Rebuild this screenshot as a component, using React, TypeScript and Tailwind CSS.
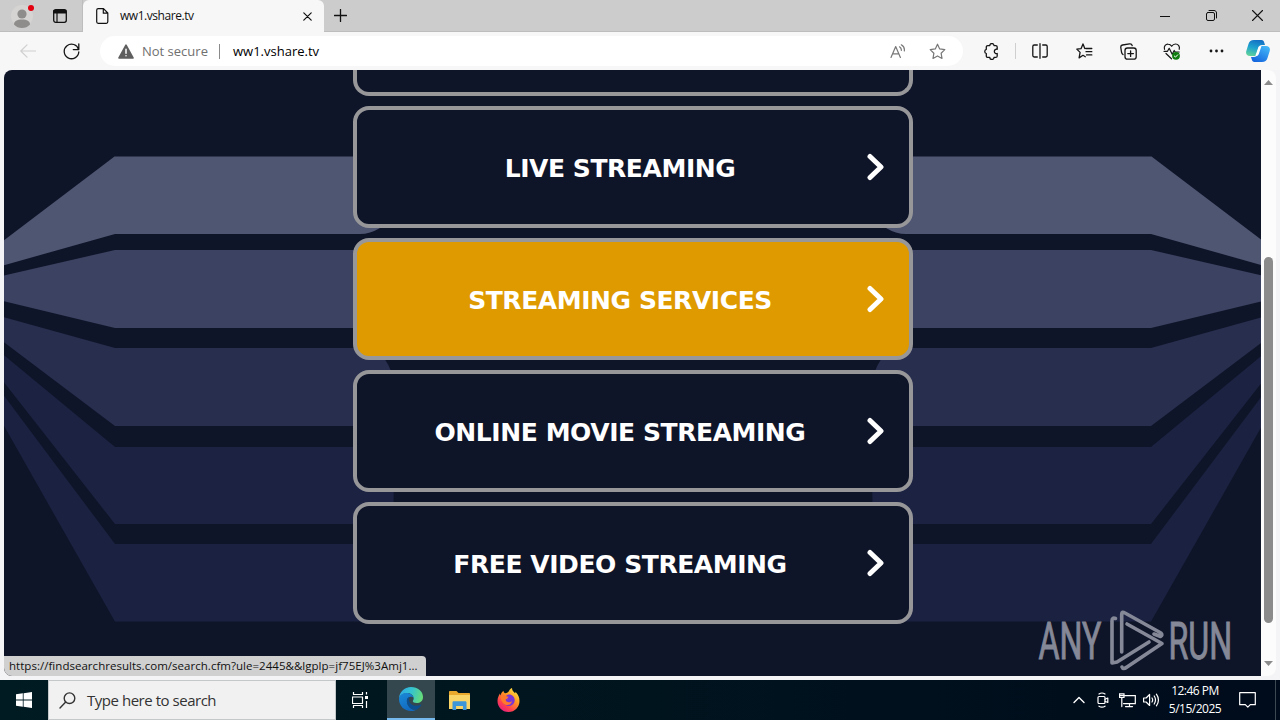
import React from "react";

type IconProps = { w: number; h: number; box?: string; className?: string; children: React.ReactNode };

function Icon({ w, h, box, className = "", children }: IconProps) {
  return (
    <svg
      width={w}
      height={h}
      viewBox={box ?? `0 0 ${w} ${h}`}
      fill="none"
      stroke="currentColor"
      strokeLinecap="round"
      strokeLinejoin="round"
      className={`block shrink-0 ${className}`}
    >
      {children}
    </svg>
  );
}

function TabStrip() {
  return (
    <div className="flex h-8 shrink-0 bg-[#cccccc] text-[#111]">
      <div className="flex w-[83px] items-center border-r border-b border-[#bdbdbd] pl-[11px]">
        <Icon w={23} h={28}>
          <g stroke="none">
            <circle cx="11" cy="14" r="11" fill="#d6d4d2" />
            <circle cx="11" cy="12" r="4.600" fill="#8f8d8b" />
            <path d="M3 22.500c0-3.500 3-5 8-5s8 1.500 8 5c-2 2.500-5 3.500-8 3.500s-6-1-8-3.500z" fill="#8f8d8b" />
            <circle cx="20" cy="6" r="3" fill="#e3000f" />
          </g>
        </Icon>
        <Icon w={14} h={14} className="ml-[19px]">
          <rect x="0.700" y="0.700" width="12.600" height="12.600" rx="2" strokeWidth="1.300" />
          <path d="M1 1.500h12v2.500H1z" fill="currentColor" strokeWidth="1" />
          <path d="M4 4v9" strokeWidth="1.200" />
        </Icon>
      </div>
      <div className="flex w-[241px] items-center rounded-t-[6px] bg-[#f7f7f7] pl-[13px]">
        <Icon w={13} h={16}>
          <path d="M2.200 0.700h5.300l4.300 4.300v8.800c0 .8-.6 1.500-1.500 1.500H2.200c-.8 0-1.500-.7-1.500-1.500V2.200c0-.8.7-1.500 1.500-1.500z M7.300 1v4.200h4.400" strokeWidth="1.200" />
        </Icon>
        <span className="ml-[11px] w-[183px] text-[12px] leading-4 tracking-[-0.45px]">ww1.vshare.tv</span>
        <Icon w={9} h={9}>
          <path d="M.8.8l7.400 7.400M8.200.8L.8 8.200" strokeWidth="1.200" />
        </Icon>
      </div>
      <div className="flex flex-1 items-center border-b border-[#bdbdbd] pl-[10px]">
        <Icon w={13} h={13}>
          <path d="M6.500.5v12M.5 6.500h12" strokeWidth="1.300" />
        </Icon>
      </div>
      <div className="flex w-[138px] border-b border-[#bdbdbd]">
        <div className="flex w-[46px] items-center justify-center">
          <Icon w={10} h={10}><path d="M0 5.500h10" /></Icon>
        </div>
        <div className="flex w-[46px] items-center justify-center">
          <Icon w={11} h={11}>
            <rect x="0.500" y="2.500" width="8" height="8" rx="1.500" />
            <path d="M3 .5h5c1.500 0 2.500 1 2.500 2.500v5" />
          </Icon>
        </div>
        <div className="flex w-[46px] items-center justify-center">
          <Icon w={11} h={11}><path d="M.5.5l10 10M10.500.5l-10 10" strokeWidth="1.100" /></Icon>
        </div>
      </div>
    </div>
  );
}

function ToolCell({ children }: { children: React.ReactNode }) {
  return <div className="flex w-11 items-center justify-center">{children}</div>;
}

function Toolbar() {
  return (
    <div className="flex h-[38px] shrink-0 items-center bg-[#f7f7f7] text-[#161616]">
      <div className="flex w-[100px] items-center pl-[20px]">
        <Icon w={16} h={14} className="text-[#d0d0d0]">
          <path d="M15.500 7H.8M7 .8L.8 7 7 13.200" strokeWidth="1.200" />
        </Icon>
        <Icon w={17} h={17} className="ml-[27px]">
          <path d="M15.600 6.600A7.300 7.300 0 1 0 15.800 9M15.800 1v5.600h-5.500" strokeWidth="1.300" />
        </Icon>
      </div>
      <div className="flex h-[30px] w-[863px] items-center rounded-full bg-white pl-[18px]">
        <Icon w={16} h={15}>
          <path d="M8 1.200L15 14H1z" fill="#5f5f5f" stroke="#5f5f5f" strokeWidth="1.600" />
          <path d="M8 5.300v4M8 11.700v.1" stroke="#fff" strokeWidth="1.500" />
        </Icon>
        <span className="ml-[8px] w-[77px] text-[13px] leading-4 text-[#707070]">Not secure</span>
        <span className="h-[15px] w-px bg-[#8a8a8a]" />
        <span className="ml-[13px] w-[657px] text-[13px] leading-4 text-black">ww1.vshare.tv</span>
        <Icon w={16} h={15} className="text-[#777]">
          <path d="M1 13.500L5.700 2.500l4.700 11M2.500 9.800h6.300M9.500 2.800c1.300.8 2 2.200 1.800 3.700M11.300.8c2.300 1.300 3.400 3.700 3 6.200" strokeWidth="1.200" />
        </Icon>
        <Icon w={17} h={17} className="ml-[23px] text-[#777]">
          <path d="M8.500 1.200l2.200 4.700 5.100.7-3.700 3.600.9 5.200-4.500-2.500L4 15.400l.9-5.200L1.200 6.600l5.100-.7z" strokeWidth="1.200" />
        </Icon>
      </div>
      <div className="flex w-[51px] items-center pl-[20px]">
        <Icon w={16} h={17}>
          <path d="M4.800 2.600h2a2.100 2.100 0 0 1 4.200 0h1.700c.8 0 1.500.6 1.500 1.500v2.200a2.200 2.200 0 1 0 0 4.200v2.400c0 .8-.6 1.500-1.500 1.500H11a2.100 2.100 0 0 1-4.200 0h-2c-.9 0-1.500-.6-1.500-1.500v-2.400a2.200 2.200 0 0 1 0-4.200V4.100c0-.9.600-1.500 1.500-1.500z" strokeWidth="1.300" />
        </Icon>
      </div>
      <span className="mr-[2px] ml-px h-4 w-px bg-[#cfcfcf]" />
      <ToolCell>
        <Icon w={16} h={16}>
          <path d="M5.300 2H2.200C1.400 2 .8 2.600.8 3.400v9.200c0 .8.600 1.400 1.400 1.400h3.100M10.700 2h3.100c.8 0 1.400.6 1.400 1.400v9.200c0 .8-.6 1.400-1.400 1.400h-3.100M8 .7v14.600" strokeWidth="1.300" />
        </Icon>
      </ToolCell>
      <ToolCell>
        <Icon w={17} h={16}>
          <path d="M8.800 5.500L7 .9 5 5.700.8 6.100l3.300 3.300-1 5.500L7 12.300l2.300 1.400M9.800 5.500h6M10 8.700h5.800M10.500 11.900h5.300" strokeWidth="1.300" />
        </Icon>
      </ToolCell>
      <ToolCell>
        <Icon w={17} h={17}>
          <rect x="5" y="5" width="11.200" height="11.200" rx="2.500" strokeWidth="1.300" />
          <path d="M10.600 7.800v5.600M7.800 10.600h5.600" strokeWidth="1.300" />
          <path d="M3 11.600C1.800 10.700 1.700 10 1.500 9L.8 4.500C.6 3 1.300 2.200 2.500 2L9.500.9c1.400-.2 2.400.4 2.700 1.700" strokeWidth="1.300" />
        </Icon>
      </ToolCell>
      <ToolCell>
        <Icon w={18} h={17}>
          <path d="M1.500 6.300C.5 3 3 .8 5.200 1.100c1.600.1 2.800 1.100 3.500 2.200C9.500 2 10.800 1 12.500 1c2.800 0 4.600 2.500 3.700 5.300M1 8.300h3.500l1.700-3 3 6 2-3.800 1 1.500h4M3 10.500l5.500 5.300" strokeWidth="1.200" />
          <circle cx="13" cy="12.800" r="3.900" fill="#107c10" stroke="none" />
          <path d="M11.300 13l1.200 1.100 2.200-2.300" stroke="#fff" strokeWidth="1" />
        </Icon>
      </ToolCell>
      <ToolCell>
        <Icon w={15} h={4}>
          <g fill="currentColor" stroke="none">
            <circle cx="2" cy="2" r="1.400" />
            <circle cx="7.500" cy="2" r="1.400" />
            <circle cx="13" cy="2" r="1.400" />
          </g>
        </Icon>
      </ToolCell>
      <div className="flex w-10 items-center justify-center">
        <Icon w={24} h={22}>
          <defs>
            <linearGradient id="cpA" x1="0.600" y1="0" x2="0.300" y2="1">
              <stop offset="0" stopColor="#1470c4" />
              <stop offset="0.500" stopColor="#1ea3cf" />
              <stop offset="1" stopColor="#5fd29a" />
            </linearGradient>
            <linearGradient id="cpB" x1="0.800" y1="0" x2="0.200" y2="1">
              <stop offset="0" stopColor="#43b8f8" />
              <stop offset="1" stopColor="#1463dd" />
            </linearGradient>
          </defs>
          <g stroke="none">
            <path d="M8 0h7.500c1.700 0 2.300 1.300 2.700 2.500L19 5h-3c-2 0-3 1-3.500 2.700L10 16H4c-3 0-4.500-2-3.700-5L2.500 4C3.300 1.500 5 0 8 0z" fill="url(#cpA)" />
            <path d="M16 22H8.500c-1.700 0-2.300-1.300-2.700-2.500L5 17h3c2 0 3-1 3.500-2.700L14 6h6c3 0 4.500 2 3.700 5L21.500 18c-.8 2.500-2.500 4-5.500 4z" fill="url(#cpB)" />
            <path d="M15.500 6h-1c-1.500 0-2 .8-2.400 2L9.300 16h.9c1.500 0 2.200-.8 2.600-2z" fill="#fff" />
          </g>
        </Icon>
      </div>
    </div>
  );
}

function Bands() {
  return (
    <>
      <path fill="#4f5672" d="M3 241L114.500 156.500H400V228H380Q370 234 360 234H115L3 265.500z" />
      <path fill="#3c4261" d="M3 275.700L115 250H380V328H115L3 301z" />
      <path fill="#282e4e" d="M3 317L115 348H375Q386 358 391 371V426H115L3 341.500z" />
      <path fill="#1c2342" d="M3 354.500L115 447H394.500L393.500 503V524H115L3 381z" />
      <path fill="#1b2241" d="M3 394.500L115 544H380V621.500H115L3 424z" />
    </>
  );
}

function Backdrop() {
  return (
    <svg className="absolute inset-0 block" width="1257" height="606" viewBox="4 70 1257 606">
      <Bands />
      <g transform="translate(1266 0) scale(-1 1)">
        <Bands />
      </g>
    </svg>
  );
}

const links = [
  { label: "LIVE STREAMING", active: false },
  { label: "STREAMING SERVICES", active: true },
  { label: "ONLINE MOVIE STREAMING", active: false },
  { label: "FREE VIDEO STREAMING", active: false },
];

function LinkCard({ label, active }: { label: string; active: boolean }) {
  return (
    <div
      className={`flex h-[122px] items-center rounded-[16px] border-4 border-[#979799] pr-[25px] pl-[17px] ${
        active ? "bg-[#df9a00]" : "bg-[#0f1529]"
      }`}
    >
      <span className="flex-1 pt-[4px] pr-px text-center font-['DejaVu_Sans',sans-serif] text-[25px] leading-8 font-bold tracking-[-0.43px] whitespace-nowrap text-white">
        {label}
      </span>
      <Icon w={17} h={28} className="text-white">
        <path d="M3 3.500L14 14 3 24.500" strokeWidth="5" />
      </Icon>
    </div>
  );
}

function Watermark() {
  return (
    <svg className="absolute top-[530px] left-[1033px] block" width="204" height="76" viewBox="1037 600 204 76">
      <g fill="#858897" stroke="#858897" strokeWidth="1" fontFamily="Roboto" fontSize="51.500">
        <text transform="translate(1038.500 659) scale(0.625 1)">ANY</text>
        <text transform="translate(1168.500 659) scale(0.625 1)">RUN</text>
      </g>
      <g fill="none" stroke="#858897" strokeWidth="3.600" strokeLinejoin="round" strokeLinecap="round">
        <path d="M1115.500 618.500Q1112 617 1112 621V663L1117 662L1149 642" />
        <path d="M1121.700 652V614Q1121.700 611 1125 613L1161 633Q1163 635 1160.500 636.500L1154 634" />
        <path d="M1127 624L1162 643.500L1127 667Q1123 670 1122 667" />
      </g>
    </svg>
  );
}

function Page() {
  return (
    <div className="flex h-[610px] shrink-0 bg-[#f4f4f6] pr-1 pb-1 pl-1">
      <div className="relative h-[606px] w-[1257px] overflow-hidden rounded-tl-[8px] rounded-bl-[8px] bg-[#0f1529]">
        <Backdrop />
        <div className="relative ml-[349px] flex w-[560px] flex-col gap-[10px]">
          <div className="h-[26px] rounded-b-[16px] border-4 border-t-0 border-[#979799] bg-[#0f1529]" />
          {links.map((l) => (
            <LinkCard key={l.label} label={l.label} active={l.active} />
          ))}
        </div>
        <Watermark />
        <div className="absolute bottom-0 left-0 flex h-5 w-[422px] items-center rounded-tr-[4px] bg-[#d0d0d0] pl-[5px] text-[11.500px] leading-4 tracking-[0.03px] whitespace-nowrap text-[#111]">
          https://findsearchresults.com/search.cfm?ule=2445&amp;&amp;lgplp=jf75EJ%3Amj1...
        </div>
      </div>
      <div className="flex w-[15px] flex-col items-center rounded-r-[8px] bg-[#fcfcfc] text-[#8b8b8b]">
        <Icon w={9} h={5} className="mt-[10px]">
          <path d="M4.500 0L9 5H0z" fill="currentColor" stroke="none" />
        </Icon>
        <div className="mt-[172px] h-[366px] w-[9px] rounded-full bg-[#8b8b8b]" />
        <Icon w={9} h={5} className="mt-[38px]">
          <path d="M4.500 5L9 0H0z" fill="currentColor" stroke="none" />
        </Icon>
      </div>
    </div>
  );
}

function EdgeLogo() {
  return (
    <Icon w={24} h={24}>
      <defs>
        <linearGradient id="edA" x1="0" y1="0.300" x2="1" y2="0.500">
          <stop offset="0" stopColor="#2fa8e6" />
          <stop offset="0.500" stopColor="#35c4cf" />
          <stop offset="1" stopColor="#67dc78" />
        </linearGradient>
        <linearGradient id="edB" x1="0" y1="0" x2="0.500" y2="1">
          <stop offset="0" stopColor="#1b8ad8" />
          <stop offset="1" stopColor="#1169c0" />
        </linearGradient>
      </defs>
      <g stroke="none">
        <path d="M0 12C0 5 5.500 0 12 0c7 0 12 4.500 12 10 0 4-3 6-6.300 6-2.700 0-3.900-.9-3.900-1.700 0-.7.900-1 .9-2.800C14.700 8.500 12 6 8.500 6 4 6 .6 8.500 0 12z" fill="url(#edA)" />
        <path d="M0 12c.5-4 4-6 7.500-6 3 0 6.500 1.500 7.200 5-.7-1-2-1.500-3.200-1.300C8.500 10 7.500 13 8 15.500c.8 4.500 5.500 8.500 9.500 7C15.800 23.500 14 24 12 24 5.500 24 0 19 0 12z" fill="url(#edB)" />
        <path d="M8 15c-.5-2.500.7-4.700 2.700-5.200-1 1.500-1.200 3.200-.2 5.200 1.500 3.300 6.500 5 11.500 2.500.3-.1.600.2.400.5-1 1.900-2.700 3.500-4.400 4.400C13.500 24 8.700 20 8 15z" fill="#0b4f91" />
      </g>
    </Icon>
  );
}

function FirefoxLogo() {
  return (
    <Icon w={23} h={24}>
      <defs>
        <linearGradient id="ffA" x1="0.900" y1="0" x2="0.200" y2="1">
          <stop offset="0" stopColor="#fff04a" />
          <stop offset="0.400" stopColor="#ff9a22" />
          <stop offset="0.750" stopColor="#ff3f4f" />
          <stop offset="1" stopColor="#e01a86" />
        </linearGradient>
      </defs>
      <g stroke="none">
        <path d="M11.500 24C5 24 .5 19 .5 13c0-3 1.200-5.500 2.500-7.500.1 1 .3 1.500.6 2C4 5.500 5 4 6.500 2.800c0 1.200.6 2 1.500 2.500C10 5 11.500 4 12 3c.5-1.200 1.500-2.300 3-3 0 2.500 1.500 3.500 3 5.200.5-.5.500-1 .4-1.500C21.500 6.500 22.500 9.500 22.500 13c0 6-4.500 11-11 11z" fill="url(#ffA)" />
        <path d="M12 6.500c3.300 0 5.700 2.500 5.700 5.700S15 18 11.800 18s-5.600-2.500-5.600-5.300c0-.7.100-1.300.3-1.700 1.500-.8 3 .5 4.800.2-1-.7-2-1.200-3.300-1.400C8.800 7.800 10 6.500 12 6.500z" fill="#7a35d5" />
        <path d="M3.500 8C5 6.500 7 6.500 8 7.500c.7.800 2 1 3.500 1.200-.2 1.200-1.500 1.500-2.300 2-.6.500-.4 1.500-.2 2.100 1 2 4.500 1.700 6 .2-.5 3-3 4.500-5.500 4C6 16.500 3.500 12 3.500 8z" fill="#ff7a2a" />
      </g>
    </Icon>
  );
}

function Taskbar() {
  return (
    <div className="flex h-10 shrink-0 bg-linear-to-r from-[#001b22] via-[#00141e] to-[#000b1b] text-white">
      <div className="flex w-12 items-center justify-center">
        <Icon w={16} h={16}>
          <path d="M0 2.300l6.800-1v6.300H0zM7.600 1.200L16 0v7.600H7.600zM0 8.400h6.800v6.300L0 13.700zM7.600 8.400H16V16l-8.400-1.200z" fill="#fff" stroke="none" />
        </Icon>
      </div>
      <div className="flex w-72 items-center border border-[#c5c8c8] bg-[#f1f1f1] pl-[10px] text-[#333]">
        <Icon w={17} h={17}>
          <circle cx="10.500" cy="6.200" r="5.300" strokeWidth="1.400" />
          <path d="M6.700 10L1 16" strokeWidth="1.400" />
        </Icon>
        <span className="ml-[11px] text-[15px] leading-5 tracking-[-0.47px] whitespace-nowrap">Type here to search</span>
      </div>
      <div className="flex w-[51px] items-center pl-[16px]">
        <Icon w={17} h={16}>
          <path d="M1.500 0v2.500h9V0M.5 5h10v6.500H.5zM1.500 16v-2.500h9V16M14.500 0v2.500M14.500 9v7" strokeLinecap="butt" strokeWidth="1.200" />
          <path d="M13 4h3v3h-3z" fill="#fff" stroke="none" />
        </Icon>
      </div>
      <div className="flex w-12 items-center justify-center border-b-2 border-[#76b9ed] bg-[#34474f]">
        <EdgeLogo />
      </div>
      <div className="flex w-[49px] items-center justify-center pl-px">
        <Icon w={22} h={19}>
          <g stroke="none">
            <path d="M0 1c0-.6.400-1 1-1h6.500l2 2H20c.6 0 1 .4 1 1v15H0z" fill="#e8a92c" />
            <path d="M0 4h21v14H0z" fill="#f9d467" />
            <path d="M3.500 19v-7.500c0-.8.500-1.300 1.300-1.300h11.400c.8 0 1.300.5 1.300 1.300V19h-3.700v-4H7.200v4z" fill="#3d96d8" />
            <path d="M7.200 15h6.600v3H7.200z" fill="#f9d467" />
          </g>
        </Icon>
      </div>
      <div className="flex w-[49px] items-center justify-center">
        <FirefoxLogo />
      </div>
      <div className="flex flex-1 items-center justify-end">
        <Icon w={12} h={8} className="mr-[12px]">
          <path d="M1 6.500L6 1.500l5 5" strokeWidth="1.400" />
        </Icon>
        <Icon w={12} h={16} className="mr-[10px]">
          <rect x="1" y="4.500" width="7" height="7" rx="1" strokeWidth="1.200" />
          <path d="M8 7.300l2.800-1.300v4.500L8 9.200M2 2Q5 0 8 2M2 14.200Q5 16.200 8 14.200" strokeWidth="1.200" />
        </Icon>
        <Icon w={17} h={15} className="mr-[7px]">
          <path d="M6 2.600h10.300v8H4.500M10.500 10.600v3M6.500 13.600h7M.6.900h4.400v3.600H.6zM2.800 4.500v9.100M.8 2.600h4" strokeWidth="1.200" strokeLinejoin="miter" />
        </Icon>
        <Icon w={17} h={14} className="mr-[8px]">
          <path d="M.6 5h2.500l3.500-3.500v11L3.100 9H.6zM9 5Q10.300 7 9 9M11.200 3Q13.800 7 11.200 11M13.400 1.200Q17.500 7 13.400 12.800" strokeWidth="1.200" />
        </Icon>
        <div className="flex w-[54px] flex-col items-center text-[12px] leading-[18px] tracking-[-0.5px] whitespace-nowrap">
          <span>12:46 PM</span>
          <span>5/15/2025</span>
        </div>
        <Icon w={17} h={16} className="mr-[19px] ml-[17px]">
          <path d="M.7.7h15.600v12h-5l-2.500 2.500-2.500-2.500H.7z" strokeWidth="1.200" />
        </Icon>
        <span className="mr-[4px] h-10 w-px bg-[#3c4852]" />
      </div>
    </div>
  );
}

export default function App() {
  return (
    <div className="flex h-[720px] w-[1280px] flex-col overflow-hidden bg-[#f4f4f6] font-['Open_Sans','Noto_Sans',sans-serif]">
      <TabStrip />
      <Toolbar />
      <Page />
      <Taskbar />
    </div>
  );
}
